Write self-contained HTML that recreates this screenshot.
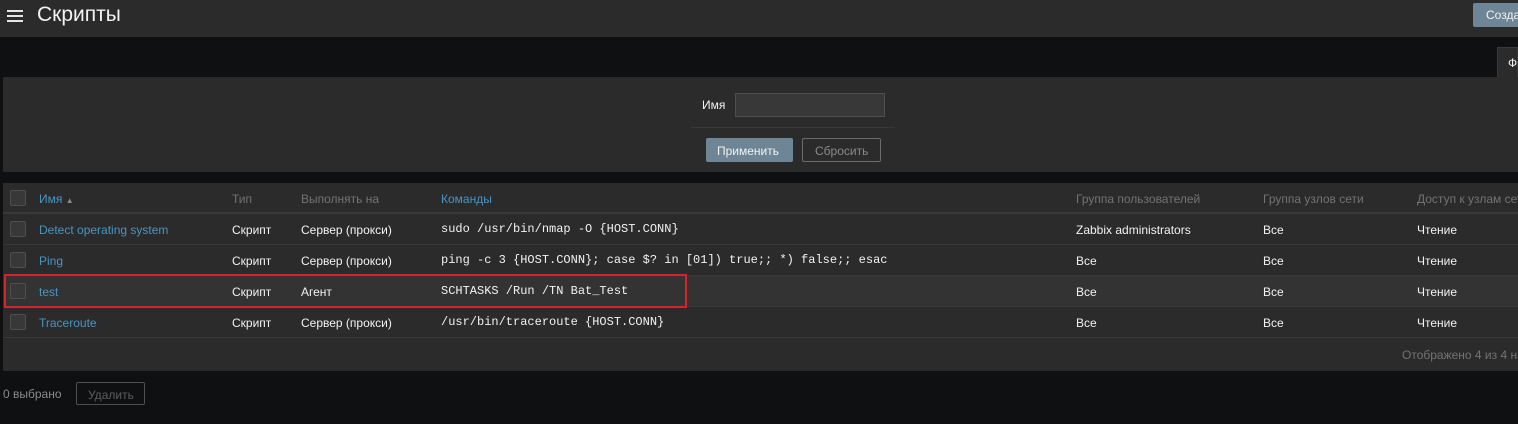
<!DOCTYPE html>
<html><head><meta charset="utf-8"><style>
*{margin:0;padding:0;box-sizing:border-box}
body{width:1518px;height:424px;background:#0e1012;font-family:"Liberation Sans",Arial,sans-serif;font-size:12px;color:#f2f2f2;position:relative;overflow:hidden}
.abs{position:absolute}
.hdr{left:0;top:0;width:1518px;height:37px;background:#2b2b2b}
.t{white-space:nowrap}
.filter{left:3px;top:77px;width:1515px;height:95px;background:#2b2b2b}
.tab{left:1497px;top:47px;width:21px;height:31px;background:#2b2b2b;border:1px solid #383838;border-bottom:none}
.tbl{left:3px;top:183px;width:1515px;height:188px;background:#2b2b2b}
.row{position:absolute;left:3px;width:1515px;height:31px;border-bottom:1px solid #383838}
.cb{position:absolute;left:7px;top:7px;width:16px;height:16px;background:#383838;border:1px solid #4f4f4f;border-radius:2px}
.c{position:absolute;top:9px;white-space:nowrap}
.lk{color:#4796c4}
.mono{font-family:"Liberation Mono",monospace;font-size:12px;top:8px}
.gr{color:#737373}
</style></head><body>
<div class="abs hdr"></div>
<svg class="abs" style="left:7px;top:9px" width="17" height="14"><rect y="1" width="16" height="2" fill="#e6e6e6"/><rect y="6" width="16" height="2" fill="#e6e6e6"/><rect y="11" width="16" height="2" fill="#e6e6e6"/></svg>
<div class="abs t" style="left:37px;top:3px;font-size:21px;color:#f2f2f2">Скрипты</div>
<div class="abs t" style="left:1473px;top:3px;width:60px;height:24px;background:#6e8596;border-radius:2px;color:#f2f2f2;padding:5px 0 0 13px">Создать</div>
<div class="abs tab"><span class="t" style="position:absolute;left:10px;top:8px">Фильтр</span></div>
<div class="abs filter">
 <div class="abs t" style="left:699px;top:21px">Имя</div>
 <div class="abs" style="left:732px;top:16px;width:150px;height:24px;background:#383838;border:1px solid #4f4f4f"></div>
 <div class="abs" style="left:688px;top:50px;width:204px;height:1px;background:#383838"></div>
 <div class="abs t" style="left:703px;top:61px;width:87px;height:24px;background:#6e8596;border-radius:2px;padding:6px 0 0 11px">Применить</div>
 <div class="abs t" style="left:799px;top:61px;width:79px;height:24px;border:1px solid #6c6c6c;border-radius:2px;padding:5px 0 0 12px;color:#8a8a8a">Сбросить</div>
</div>
<div class="abs tbl"></div>
<div class="row" style="top:183px;border-bottom:2px solid #383838"><div class="cb"></div>
 <span class="c lk" style="left:36px">Имя <span style="font-size:8px;color:#8a8a8a">▲</span></span>
 <span class="c gr" style="left:229px">Тип</span><span class="c gr" style="left:298px">Выполнять на</span>
 <span class="c lk" style="left:438px">Команды</span><span class="c gr" style="left:1073px">Группа пользователей</span>
 <span class="c gr" style="left:1260px">Группа узлов сети</span><span class="c gr" style="left:1414px">Доступ к узлам сети</span></div>
<div class="row" style="top:214px"><div class="cb"></div><span class="c lk" style="left:36px">Detect operating system</span><span class="c" style="left:229px">Скрипт</span><span class="c" style="left:298px">Сервер (прокси)</span><span class="c mono" style="left:438px">sudo /usr/bin/nmap -O {HOST.CONN}</span><span class="c" style="left:1073px">Zabbix administrators</span><span class="c" style="left:1260px">Все</span><span class="c" style="left:1414px">Чтение</span></div>
<div class="row" style="top:245px"><div class="cb"></div><span class="c lk" style="left:36px">Ping</span><span class="c" style="left:229px">Скрипт</span><span class="c" style="left:298px">Сервер (прокси)</span><span class="c mono" style="left:438px">ping -c 3 {HOST.CONN}; case $? in [01]) true;; *) false;; esac</span><span class="c" style="left:1073px">Все</span><span class="c" style="left:1260px">Все</span><span class="c" style="left:1414px">Чтение</span></div>
<div class="row" style="top:276px;background:#333"><div class="cb"></div><span class="c lk" style="left:36px">test</span><span class="c" style="left:229px">Скрипт</span><span class="c" style="left:298px">Агент</span><span class="c mono" style="left:438px">SCHTASKS /Run /TN Bat_Test</span><span class="c" style="left:1073px">Все</span><span class="c" style="left:1260px">Все</span><span class="c" style="left:1414px">Чтение</span></div>
<div class="row" style="top:307px"><div class="cb"></div><span class="c lk" style="left:36px">Traceroute</span><span class="c" style="left:229px">Скрипт</span><span class="c" style="left:298px">Сервер (прокси)</span><span class="c mono" style="left:438px">/usr/bin/traceroute {HOST.CONN}</span><span class="c" style="left:1073px">Все</span><span class="c" style="left:1260px">Все</span><span class="c" style="left:1414px">Чтение</span></div>
<div class="abs t gr" style="left:1402px;top:348px">Отображено 4 из 4 найденных</div>
<div class="abs" style="left:4px;top:274px;width:683px;height:34px;border:2px solid #d5222b"></div>
<div class="abs t gr" style="left:3px;top:387px;color:#8a8a8a">0 выбрано</div>
<div class="abs t" style="left:76px;top:382px;width:69px;height:23px;border:1px solid #4f4f4f;border-radius:2px;color:#5e5e5e;padding:5px 0 0 11px">Удалить</div>
</body></html>
